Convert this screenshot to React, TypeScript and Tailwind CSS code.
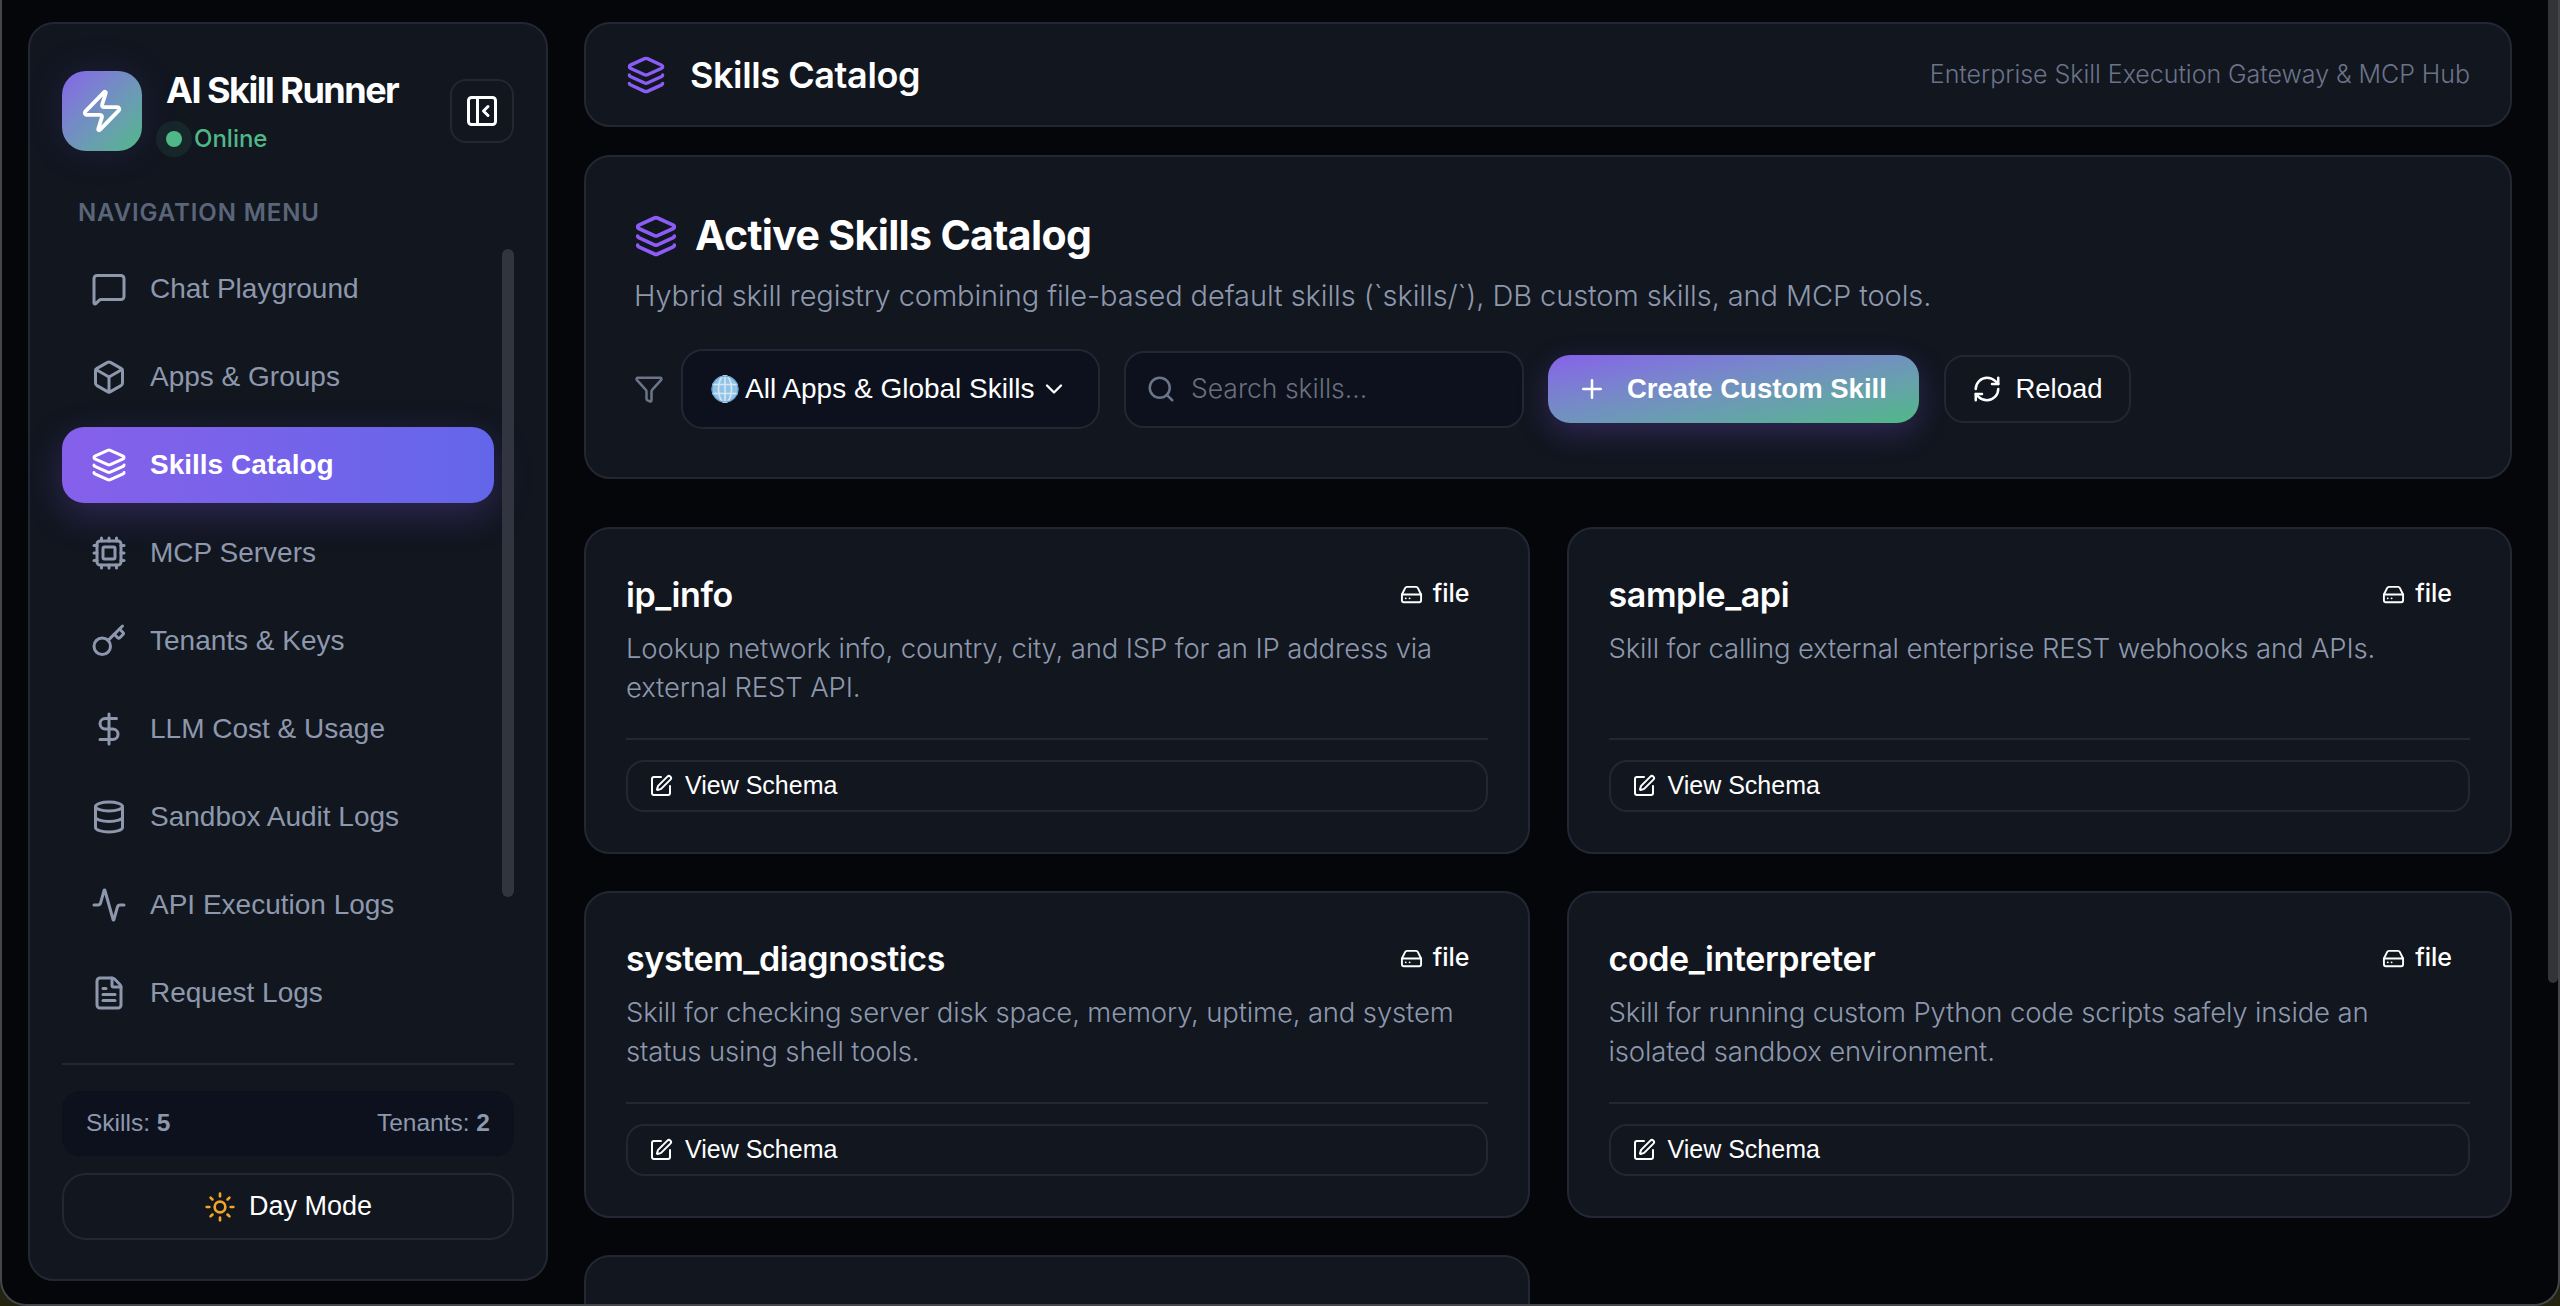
import { Activity, Box, ChevronDown, Cpu, Database, DollarSign, FileText, Filter, HardDrive, Key, Layers, MessageSquare, PanelLeftClose, Plus, RefreshCw, Search, SquarePen, Sun, Zap } from 'lucide-react'

const navItems = [
  { label: 'Chat Playground', icon: MessageSquare },
  { label: 'Apps & Groups', icon: Box },
  { label: 'Skills Catalog', icon: Layers, active: true },
  { label: 'MCP Servers', icon: Cpu },
  { label: 'Tenants & Keys', icon: Key },
  { label: 'LLM Cost & Usage', icon: DollarSign },
  { label: 'Sandbox Audit Logs', icon: Database },
  { label: 'API Execution Logs', icon: Activity },
  { label: 'Request Logs', icon: FileText },
]

const skills = [
  { name: 'ip_info', desc: 'Lookup network info, country, city, and ISP for an IP address via external REST API.' },
  { name: 'sample_api', desc: 'Skill for calling external enterprise REST webhooks and APIs.' },
  { name: 'system_diagnostics', desc: 'Skill for checking server disk space, memory, uptime, and system status using shell tools.' },
  { name: 'code_interpreter', desc: 'Skill for running custom Python code scripts safely inside an isolated sandbox environment.' },
]

function GlobeEmoji() {
  return (
    <svg viewBox="0 0 28 28" className="w-[28px] h-[28px] shrink-0">
      <circle cx="14" cy="14" r="13.5" fill="#8fc3ea" />
      <g fill="none" stroke="#d9e6ee" strokeWidth="1.6">
        <ellipse cx="14" cy="14" rx="6.5" ry="13.5" />
        <path d="M14 .5v27M1 9.5h26M1 18.5h26" />
      </g>
      <circle cx="14" cy="14" r="13" fill="none" stroke="#5f9fd2" strokeWidth="1" />
    </svg>
  )
}

function Sidebar() {
  return (
    <aside className="w-[520px] h-[1259px] shrink-0 rounded-[26px] border-2 border-[#232733] bg-[#11161f] flex flex-col pl-[32px] pr-[32px] pt-[46px] pb-[39px]">
      {/* Marca */}
      <div className="flex items-center h-[82px]">
        <div className="w-[80px] h-[80px] rounded-[24px] bg-gradient-to-br from-[#8660ea] to-[#4fb887] flex items-center justify-center shadow-[0_0_40px_rgba(139,92,246,0.12)]">
          <Zap className="w-[46px] h-[46px] text-white" strokeWidth={2} />
        </div>
        <div className="ml-[24px] flex-1 font-['Inter',sans-serif]">
          <div className="text-[36px] leading-[44px] font-bold tracking-[-1.5px] text-white translate-y-[1px]">AI Skill Runner</div>
          <div className="flex items-center mt-[12px]">
            <span className="w-[16px] h-[16px] rounded-full bg-[#4fb887] shadow-[0_0_0_10px_rgba(79,184,135,0.1)]" />
            <span className="ml-[12px] text-[24px] leading-[32px] font-medium text-[#4fb887]">Online</span>
          </div>
        </div>
        <button className="w-[64px] h-[64px] rounded-[16px] border-2 border-[#232733] flex items-center justify-center">
          <PanelLeftClose className="w-[36px] h-[36px] text-white" strokeWidth={2} />
        </button>
      </div>

      <div className="mt-[46px] pl-[16px] text-[24px] leading-[30px] font-semibold tracking-[0.9px] text-[#5b6579] font-['Inter',sans-serif]">NAVIGATION MENU</div>

      {/* Navegacion */}
      <div className="relative mt-[23px] flex-1">
        <nav className="flex flex-col gap-[12px] w-[432px]">
          {navItems.map(({ label, icon: Icon, active }) => (
            <div
              key={label}
              className={active
                ? "h-[76px] rounded-[22px] flex items-center pl-[29px] text-white font-bold bg-gradient-to-r from-[#8660ea] to-[#6366ea] shadow-[0_12px_36px_rgba(139,92,246,0.25)]"
                : "h-[76px] rounded-[22px] flex items-center pl-[29px] text-[#8e98ad]"}
            >
              <Icon className="w-[36px] h-[36px] shrink-0" strokeWidth={2} />
              <span className="ml-[23px] text-[28px] font-['Liberation_Sans',sans-serif]">{label}</span>
            </div>
          ))}
        </nav>
        <div className="absolute right-0 top-[-2px] w-[12px] h-[648px] rounded-full bg-[#32353f]" />
      </div>

      <div className="border-t-2 border-[#232733] pt-[26px]">
        <div className="h-[65px] rounded-[18px] bg-[#0c111d] flex items-center justify-between px-[24px] text-[24.5px] text-[#8e98ad] font-['Liberation_Sans',sans-serif]">
          <span>Skills: <b>5</b></span>
          <span>Tenants: <b>2</b></span>
        </div>
        <button className="mt-[17px] w-full h-[67px] rounded-[24px] border-2 border-[#232733] flex items-center justify-center gap-[13px] text-[27px] text-white font-['Liberation_Sans',sans-serif]">
          <Sun className="w-[32px] h-[32px] text-[#f5a524]" strokeWidth={2} />
          Day Mode
        </button>
      </div>
    </aside>
  )
}

function SkillCard({ name, desc }: { name: string; desc: string }) {
  return (
    <div className="h-[327px] rounded-[26px] border-2 border-[#232733] bg-[#11161f] px-[40px] pt-[43px] flex flex-col font-['Inter',sans-serif]">
      <div className="flex items-center justify-between h-[44px]">
        <span className="text-[34px] font-semibold text-white tracking-[-0.4px]">{name}</span>
        <span className="flex items-center gap-[10px] pr-[18px] text-[25px] font-medium text-white">
          <HardDrive className="w-[23px] h-[23px]" strokeWidth={2} />
          file
        </span>
      </div>
      <p className="mt-[13px] h-[78px] text-[27.5px] leading-[39px] font-light text-[#8e98ad] tracking-[-0.15px]">{desc}</p>
      <div className="mt-[31px] border-t-2 border-[#232733] pt-[20px]">
        <button className="w-full h-[52px] rounded-[18px] border-2 border-[#232733] flex items-center pl-[21px] gap-[12px] text-[25px] text-white font-['Liberation_Sans',sans-serif]">
          <SquarePen className="w-[24px] h-[24px]" strokeWidth={2} />
          View Schema
        </button>
      </div>
    </div>
  )
}

export default function App() {
  return (
    <div className="w-[2560px] h-[1306px] overflow-hidden bg-[#23230f]">
      <div className="relative w-full h-full overflow-hidden bg-[#05060a] flex gap-[36px] pl-[26px] pt-[22px] border-x-2 border-b-2 border-[#45464a] rounded-b-[26px]">
        <Sidebar />

        <main className="w-[1928px] shrink-0 flex flex-col">
          {/* Barra superior */}
          <header className="h-[105px] shrink-0 rounded-[26px] border-2 border-[#232733] bg-[#11161f] flex items-center px-[40px] font-['Inter',sans-serif]">
            <Layers className="w-[40px] h-[40px] text-[#8b5cf6]" strokeWidth={2} />
            <h1 className="ml-[24px] flex-1 text-[36px] font-semibold text-white tracking-[-0.4px]">Skills Catalog</h1>
            <span className="text-[25px] font-light text-[#6b7389] tracking-[-0.04px]">Enterprise Skill Execution Gateway &amp; MCP Hub</span>
          </header>

          {/* Cabecera del catalogo */}
          <section className="mt-[28px] h-[324px] shrink-0 rounded-[26px] border-2 border-[#232733] bg-[#11161f] pl-[48px] pt-[54px] font-['Inter',sans-serif]">
            <div className="flex items-center h-[50px]">
              <Layers className="w-[44px] h-[44px] text-[#8b5cf6]" strokeWidth={2} />
              <h2 className="ml-[17px] text-[41px] font-bold text-white tracking-[-0.65px]">Active Skills Catalog</h2>
            </div>
            <p className="mt-[15px] text-[29px] leading-[40px] font-light text-[#8e98ad] tracking-[-0.1px]">Hybrid skill registry combining file-based default skills (`skills/`), DB custom skills, and MCP tools.</p>
            <div className="mt-[33px] flex items-center">
              <Filter className="w-[30px] h-[30px] text-[#6b7588]" strokeWidth={2} />
              <div className="ml-[17px] w-[419px] h-[80px] rounded-[22px] border-2 border-[#232733] bg-[#0c111d] flex items-center pl-[28px] text-[28px] text-white font-['Liberation_Sans',sans-serif]">
                <GlobeEmoji />
                <span className="ml-[6px]">All Apps &amp; Global Skills</span>
                <ChevronDown className="ml-[6px] w-[28px] h-[28px]" strokeWidth={2} />
              </div>
              <div className="ml-[24px] w-[400px] h-[77px] rounded-[20px] border-2 border-[#232733] bg-[#0c111d] flex items-center pl-[20px] text-[26.5px] font-light text-[#6a6f7b]">
                <Search className="w-[30px] h-[30px] text-[#6b7588]" strokeWidth={2} />
                <span className="ml-[15px]">Search skills...</span>
              </div>
              <button className="ml-[24px] w-[371px] h-[68px] rounded-[22px] bg-gradient-to-br from-[#8660ea] to-[#4fb887] flex items-center pl-[29px] gap-[20px] text-[27.5px] font-bold text-white font-['Liberation_Sans',sans-serif] shadow-[0_10px_30px_rgba(139,92,246,0.25)]">
                <Plus className="w-[30px] h-[30px]" strokeWidth={2} />
                Create Custom Skill
              </button>
              <button className="ml-[25px] w-[187px] h-[68px] rounded-[20px] border-2 border-[#232733] flex items-center justify-center gap-[13px] text-[27.5px] text-white font-['Liberation_Sans',sans-serif]">
                <RefreshCw className="w-[30px] h-[30px]" strokeWidth={2} />
                Reload
              </button>
            </div>
          </section>

          {/* Tarjetas de skills */}
          <div className="mt-[48px] grid grid-cols-2 gap-x-[37px] gap-y-[37px]">
            {skills.map((s) => <SkillCard key={s.name} {...s} />)}
            <div className="h-[327px] rounded-[26px] border-2 border-[#232733] bg-[#11161f]" />
          </div>
        </main>

        {/* Barra de scroll de la pagina */}
        <div className="absolute right-0 top-0 w-[10px] h-[983px] rounded-b-full bg-[#333438]" />
      </div>
    </div>
  )
}
